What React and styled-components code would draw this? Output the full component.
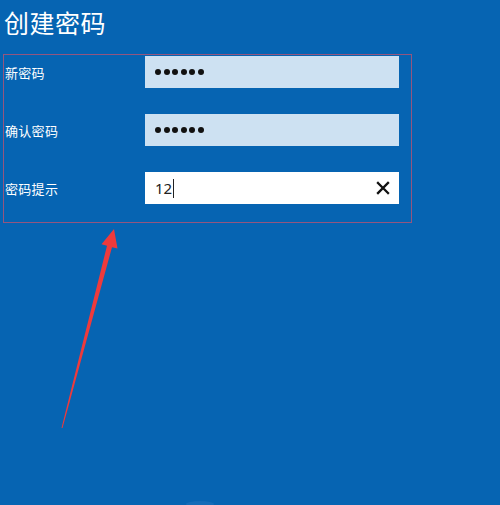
import React from 'react';
import styled, { createGlobalStyle } from 'styled-components';

const Global = createGlobalStyle`
  html, body {
    margin: 0;
    padding: 0;
    background: #0664b2;
  }
  body {
    font-family: "Noto Sans CJK SC", "Noto Sans", sans-serif;
  }
`

const Page = styled.div`
  position: relative;
  min-height: 505px;
  height: 100vh;
  overflow: hidden;
  background: #0664b2;
  padding: 4px 0 0 3px;
  box-sizing: border-box;
`

const Title = styled.h1`
  margin: 0 0 0 1px;
  font-size: 25px;
  line-height: 36px;
  font-weight: 400;
  color: #fff;
  letter-spacing: 0.5px;
`

const Form = styled.div`
  margin-top: 14px;
  width: 409px;
  box-sizing: border-box;
  border: 1px solid #94567f;
  padding: 1px 12px 18px 1px;
  display: flex;
  flex-direction: column;
  gap: 26px;
`

const Row = styled.div`
  display: flex;
  align-items: center;
  justify-content: space-between;
  height: 32px;
`

const Label = styled.span`
  color: #fff;
  font-size: 13px;
  letter-spacing: 0.3px;
`

const Field = styled.div`
  width: 254px;
  height: 32px;
  box-sizing: border-box;
  background: ${p => (p.$active ? '#ffffff' : '#cde1f2')};
  display: flex;
  align-items: center;
  padding: 0 9px 0 10px;
`

const Dots = styled.span`
  display: flex;
  gap: 2.6px;
`

const Dot = styled.i`
  width: 6px;
  height: 6px;
  border-radius: 50%;
  background: #111;
`

const Value = styled.span`
  font-family: "Noto Sans", sans-serif;
  font-size: 15px;
  color: #222;
  display: flex;
  align-items: center;
`

const Caret = styled.i`
  width: 1px;
  height: 19px;
  background: #222;
  margin-left: 1px;
`

const Clear = styled.button`
  margin-left: auto;
  border: 0;
  background: none;
  padding: 0;
  width: 14px;
  height: 14px;
  display: flex;
`

const Arrow = styled.svg`
  position: absolute;
  left: 0;
  top: 0;
  pointer-events: none;
`

const Password = () => (
  <Dots>
    {[0, 1, 2, 3, 4, 5].map(i => <Dot key={i} />)}
  </Dots>
);

export default function App() {
  return (
    <Page>
      <Global />
      <Title>创建密码</Title>
      <Form>
        <Row>
          <Label>新密码</Label>
          <Field><Password /></Field>
        </Row>
        <Row>
          <Label>确认密码</Label>
          <Field><Password /></Field>
        </Row>
        <Row>
          <Label>密码提示</Label>
          <Field $active>
            <Value>12<Caret /></Value>
            <Clear aria-label="清除">
              <svg width="14" height="14" viewBox="0 0 14 14">
                <path d="M2 2 L12 12 M12 2 L2 12" stroke="#111" strokeWidth="2.3" strokeLinecap="square" />
              </svg>
            </Clear>
          </Field>
        </Row>
      </Form>
      <Arrow width="500" height="505" viewBox="0 0 500 505">
        <polygon
          points="114,229 117.5,248.5 112,247.2 62.5,428 61.5,428 107,245.8 101.5,244.3"
          fill="#ee3a3c"
        />
        <ellipse cx="200" cy="504" rx="14" ry="3" fill="#2a78c0" opacity="0.4" />
      </Arrow>
    </Page>
  );
}
